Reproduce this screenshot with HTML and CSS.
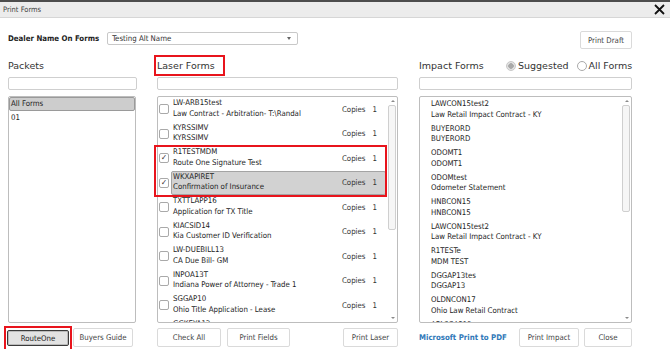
FILE: index.html
```html
<!DOCTYPE html>
<html lang="en">

<head>
  <meta charset="UTF-8">
  <meta name="viewport" content="width=device-width, initial-scale=1.0">
  <title>Print Forms</title>
  <link rel="stylesheet" href="styles.css">
</head>

<body>
  <div class="topstrip"></div>
  <div class="titlebar">
    <span class="title">Print Forms</span>
    <svg class="close-x" width="11" height="11" viewBox="0 0 11 11">
      <path d="M1 1 L10 10 M10 1 L1 10" stroke="#111" stroke-width="1.8" fill="none" />
    </svg>
  </div>

  <div class="dealer-row">
    <span class="dealer-label">Dealer Name On Forms</span>
    <div class="select">
      <span>Testing Alt Name</span>
      <span class="caret"></span>
    </div>
    <button class="btn btn-draft">Print Draft</button>
  </div>

  <div class="columns">
    <!-- Packets -->
    <div class="col col-packets">
      <div class="heading">Packets</div>
      <div class="search"></div>
      <div class="list packets-list">
        <div class="packet selected">All Forms</div>
        <div class="packet">01</div>
      </div>
      <div class="btn-row">
        <span class="mark-box"><button class="btn btn-focus">RouteOne</button></span>
        <button class="btn btn-buyers">Buyers Guide</button>
      </div>
    </div>

    <!-- Laser forms -->
    <div class="col col-laser">
      <div class="heading"><span class="heading-mark">Laser Forms</span></div>
      <div class="search"></div>
      <div class="list">
        <div class="rows">
          <div class="row">
            <span class="check"></span>
            <div class="item">
              <div class="names"><div>LW-ARB15test</div><div>Law Contract - Arbitration- T:\Randal</div></div>
              <div class="copies"><span>Copies</span><span>1</span></div>
            </div>
          </div>
          <div class="row">
            <span class="check"></span>
            <div class="item">
              <div class="names"><div>KYRSSIMV</div><div>KYRSSIMV</div></div>
              <div class="copies"><span>Copies</span><span>1</span></div>
            </div>
          </div>
          <div class="row">
            <span class="check checked">&#10003;</span>
            <div class="item">
              <div class="names"><div>R1TESTMDM</div><div>Route One Signature Test</div></div>
              <div class="copies"><span>Copies</span><span>1</span></div>
            </div>
          </div>
          <div class="row">
            <span class="check checked">&#10003;</span>
            <div class="item selected">
              <div class="names"><div>WKXAPIRET</div><div>Confirmation of Insurance</div></div>
              <div class="copies"><span>Copies</span><span>1</span></div>
            </div>
          </div>
          <div class="row">
            <span class="check"></span>
            <div class="item">
              <div class="names"><div>TXTTLAPP16</div><div>Application for TX Title</div></div>
              <div class="copies"><span>Copies</span><span>1</span></div>
            </div>
          </div>
          <div class="row">
            <span class="check"></span>
            <div class="item">
              <div class="names"><div>KIACSID14</div><div>Kia Customer ID Verification</div></div>
              <div class="copies"><span>Copies</span><span>1</span></div>
            </div>
          </div>
          <div class="row">
            <span class="check"></span>
            <div class="item">
              <div class="names"><div>LW-DUEBILL13</div><div>CA Due Bill- GM</div></div>
              <div class="copies"><span>Copies</span><span>1</span></div>
            </div>
          </div>
          <div class="row">
            <span class="check"></span>
            <div class="item">
              <div class="names"><div>INPOA13T</div><div>Indiana Power of Attorney - Trade 1</div></div>
              <div class="copies"><span>Copies</span><span>1</span></div>
            </div>
          </div>
          <div class="row">
            <span class="check"></span>
            <div class="item">
              <div class="names"><div>SGGAP10</div><div>Ohio Title Application - Lease</div></div>
              <div class="copies"><span>Copies</span><span>1</span></div>
            </div>
          </div>
          <div class="row row-cut">
            <span class="check"></span>
            <div class="item">
              <div class="names"><div>GGKEYA13</div></div>
            </div>
          </div>
        </div>
        <div class="scrollbar">
          <span class="arrow-up"></span>
          <div class="track"><div class="thumb thumb-laser"></div></div>
          <span class="arrow-down"></span>
        </div>
      </div>
      <div class="btn-row">
        <button class="btn btn-check">Check All</button>
        <button class="btn btn-fields">Print Fields</button>
        <button class="btn btn-laser">Print Laser</button>
      </div>
      <!-- highlight drawn over the two checked rows -->
      <div class="rows-mark"></div>
    </div>

    <!-- Impact forms -->
    <div class="col col-impact">
      <div class="heading impact-heading">
        <span class="impact-title">Impact Forms</span>
        <label class="radio"><span class="dot dot-on"></span>Suggested</label>
        <label class="radio radio-all"><span class="dot"></span>All Forms</label>
      </div>
      <div class="search"></div>
      <div class="list">
        <div class="rows">
          <div class="irow"><div>LAWCON15test2</div><div>Law Retail Impact Contract - KY</div></div>
          <div class="irow"><div>BUYERORD</div><div>BUYERORD</div></div>
          <div class="irow"><div>ODOMT1</div><div>ODOMT1</div></div>
          <div class="irow"><div>ODOMtest</div><div>Odometer Statement</div></div>
          <div class="irow"><div>HNBCON15</div><div>HNBCON15</div></div>
          <div class="irow"><div>LAWCON15test2</div><div>Law Retail Impact Contract - KY</div></div>
          <div class="irow"><div>R1TESTe</div><div>MDM TEST</div></div>
          <div class="irow"><div>DGGAP13tes</div><div>DGGAP13</div></div>
          <div class="irow"><div>OLDNCON17</div><div>Ohio Law Retail Contract</div></div>
          <div class="irow irow-cut"><div>AFASGAP13</div></div>
        </div>
        <div class="scrollbar">
          <span class="arrow-up"></span>
          <div class="track"><div class="thumb thumb-impact"></div></div>
          <span class="arrow-down"></span>
        </div>
      </div>
      <div class="btn-row">
        <a class="pdf-link">Microsoft Print to PDF</a>
        <button class="btn btn-impact">Print Impact</button>
        <button class="btn btn-close">Close</button>
      </div>
    </div>
  </div>
</body>

</html>
```

FILE: styles.css
```css
body {
  margin: 0;
  width: 670px;
  height: 349px;
  overflow: hidden;
  background: #fff;
  font-family: "DejaVu Sans Condensed", "DejaVu Sans", sans-serif;
  font-size: 7.8px;
  color: #333;
}

.topstrip {
  height: 2px;
  background: #4d4d4d;
}

.titlebar {
  height: 15px;
  background: #ececec;
  border-bottom: 1px solid #d6d6d6;
  display: flex;
  align-items: center;
  justify-content: space-between;
  padding: 0 5px 0 3px;
}

.title {
  font-size: 7.5px;
  color: #444;
}

.close-x {
  display: block;
}

/* dealer row */
.dealer-row {
  display: flex;
  align-items: flex-start;
  margin-top: 13px;
  padding: 0 38px 0 8px;
  height: 18px;
}

.dealer-label {
  font-weight: bold;
  line-height: 15px;
  color: #222;
}

.select {
  margin: 1px 0 0 8px;
  width: 191px;
  height: 13px;
  box-sizing: border-box;
  border: 1px solid #c8c8c8;
  border-radius: 2px;
  display: flex;
  align-items: center;
  justify-content: space-between;
  padding: 0 6px 0 4px;
  color: #333;
}

.caret {
  width: 0;
  height: 0;
  border-left: 2.5px solid transparent;
  border-right: 2.5px solid transparent;
  border-top: 3px solid #666;
}

.btn {
  font-family: "DejaVu Sans Condensed", "DejaVu Sans", sans-serif;
  font-size: 7.8px;
  color: #444;
  background: #fff;
  border: 1px solid #dadada;
  border-radius: 2px;
  height: 19px;
  padding: 0;
  margin: 0;
  cursor: pointer;
}

.btn-draft {
  margin-left: auto;
  width: 52px;
  height: 18px;
}

/* columns */
.columns {
  display: flex;
  margin-top: 6px;
  padding: 0 38px 0 8px;
}

.col {
  display: flex;
  flex-direction: column;
  position: relative;
}

.col-packets {
  width: 129px;
}

.col-laser {
  width: 241px;
  margin-left: 20px;
}

.col-impact {
  width: 213px;
  margin-left: 21px;
}

.heading {
  height: 21px;
  line-height: 21px;
  font-family: "DejaVu Sans", sans-serif;
  font-size: 9.5px;
  color: #333;
  white-space: nowrap;
}

.heading-mark {
  display: inline-block;
  height: 21px;
  box-sizing: border-box;
  line-height: 17px;
  border: 2px solid #e8141c;
  margin-left: -3px;
  padding: 0 8px 0 1px;
}

.impact-heading {
  display: flex;
  align-items: center;
}

.impact-title {
  width: 87px;
  flex-shrink: 0;
}

.radio {
  display: flex;
  align-items: center;
  flex-shrink: 0;
}

.radio-all {
  margin-left: 8px;
}

.dot {
  width: 10px;
  height: 10px;
  box-sizing: border-box;
  border-radius: 50%;
  border: 1px solid #aaa;
  background: #fff;
  margin-right: 2px;
  flex-shrink: 0;
}

.dot-on {
  background: radial-gradient(circle, #a9a9a9 0 2.5px, #e2e2e2 3px);
  border-color: #c8c8c8;
}

.search {
  margin-top: 1px;
  height: 13px;
  box-sizing: border-box;
  border: 1px solid #cfcfcf;
  border-radius: 2px;
}

.list {
  margin-top: 6px;
  height: 227px;
  box-sizing: border-box;
  border: 1px solid #bdbdbd;
  border-radius: 2px;
  overflow: hidden;
  display: flex;
}

/* packets */
.packets-list {
  width: 128px;
  flex-direction: column;
}

.packet {
  height: 14px;
  line-height: 14px;
  padding-left: 2px;
  color: #222;
}

.packet.selected {
  background: #cdcdcd;
  border: 1px solid #9a9a9a;
  border-radius: 2px;
  height: 14px;
  line-height: 12px;
  box-sizing: border-box;
  padding-left: 1px;
}

/* laser rows */
.rows {
  flex: 1;
  overflow: hidden;
}

.row {
  height: 24.5px;
  display: flex;
  align-items: center;
  padding-left: 1px;
}

.row-cut {
  align-items: flex-start;
}

.row-cut .item {
  align-items: flex-start;
  padding-top: 1px;
}

.row-cut .check {
  margin-top: 7px;
}

.check {
  width: 10px;
  height: 10px;
  box-sizing: border-box;
  border: 1px solid #a9a9a9;
  border-radius: 2px;
  background: #fff;
  font-size: 8px;
  line-height: 8px;
  text-align: center;
  color: #222;
  flex-shrink: 0;
}

.item {
  flex: 1;
  height: 24px;
  box-sizing: border-box;
  margin: 0 2px 0 2px;
  padding: 0 8px 0 1px;
  display: flex;
  align-items: center;
  justify-content: space-between;
  border: 1px solid transparent;
}

.item.selected {
  background: #d2d2d2;
  border-color: #a4a4a4;
  border-radius: 2px;
}

.names {
  line-height: 10.5px;
  margin-top: -1px;
  color: #222;
}

.copies span + span {
  margin-left: 7px;
}

/* impact rows */
.irow {
  height: 24.5px;
  box-sizing: border-box;
  padding: 1px 0 0 11px;
  line-height: 10.5px;
  color: #222;
  display: flex;
  flex-direction: column;
  justify-content: center;
}

.irow-cut {
  justify-content: flex-start;
  padding-top: 2px;
}

/* scrollbar */
.scrollbar {
  width: 9px;
  display: flex;
  flex-direction: column;
  align-items: center;
  padding: 3px 0;
  box-sizing: border-box;
}

.arrow-up,
.arrow-down {
  width: 0;
  height: 0;
  border-left: 2px solid transparent;
  border-right: 2px solid transparent;
}

.arrow-up {
  border-bottom: 2.5px solid #8a8a8a;
}

.arrow-down {
  border-top: 2.5px solid #8a8a8a;
}

.track {
  flex: 1;
  width: 100%;
  padding-top: 3px;
}

.thumb {
  width: 8px;
  box-sizing: border-box;
  border: 1px solid #cfcfcf;
  border-radius: 2px;
  background: #f6f6f6;
}

.thumb-laser {
  height: 125px;
}

.thumb-impact {
  height: 107px;
}

/* bottom buttons */
.btn-row {
  display: flex;
  align-items: flex-start;
  margin-top: 5px;
  height: 19px;
}

.mark-box {
  display: inline-block;
  border: 2px solid #e8141c;
  padding: 2px 1px 6px 1px;
  margin: -2px 0 0 -4px;
}

.btn-focus {
  width: 62px;
  height: 16px;
  background: #e2e2e2;
  border: 1px solid #3a3a3a;
  box-shadow: inset 0 0 0 1px #bbb;
  color: #222;
}

.btn-buyers {
  margin-left: 1px;
  width: 60px;
}

.btn-check {
  width: 64px;
}

.btn-fields {
  width: 63px;
  margin-left: 6px;
}

.btn-laser {
  width: 55px;
  margin-left: auto;
}

.pdf-link {
  flex: 1;
  line-height: 19px;
  font-weight: bold;
  color: #2f78b8;
}

.btn-impact {
  width: 60px;
}

.btn-close {
  width: 48px;
  margin-left: 5px;
}

.rows-mark {
  position: absolute;
  left: -3px;
  top: 90px;
  width: 233px;
  height: 52px;
  box-sizing: border-box;
  border: 2px solid #e8141c;
  pointer-events: none;
}
```
